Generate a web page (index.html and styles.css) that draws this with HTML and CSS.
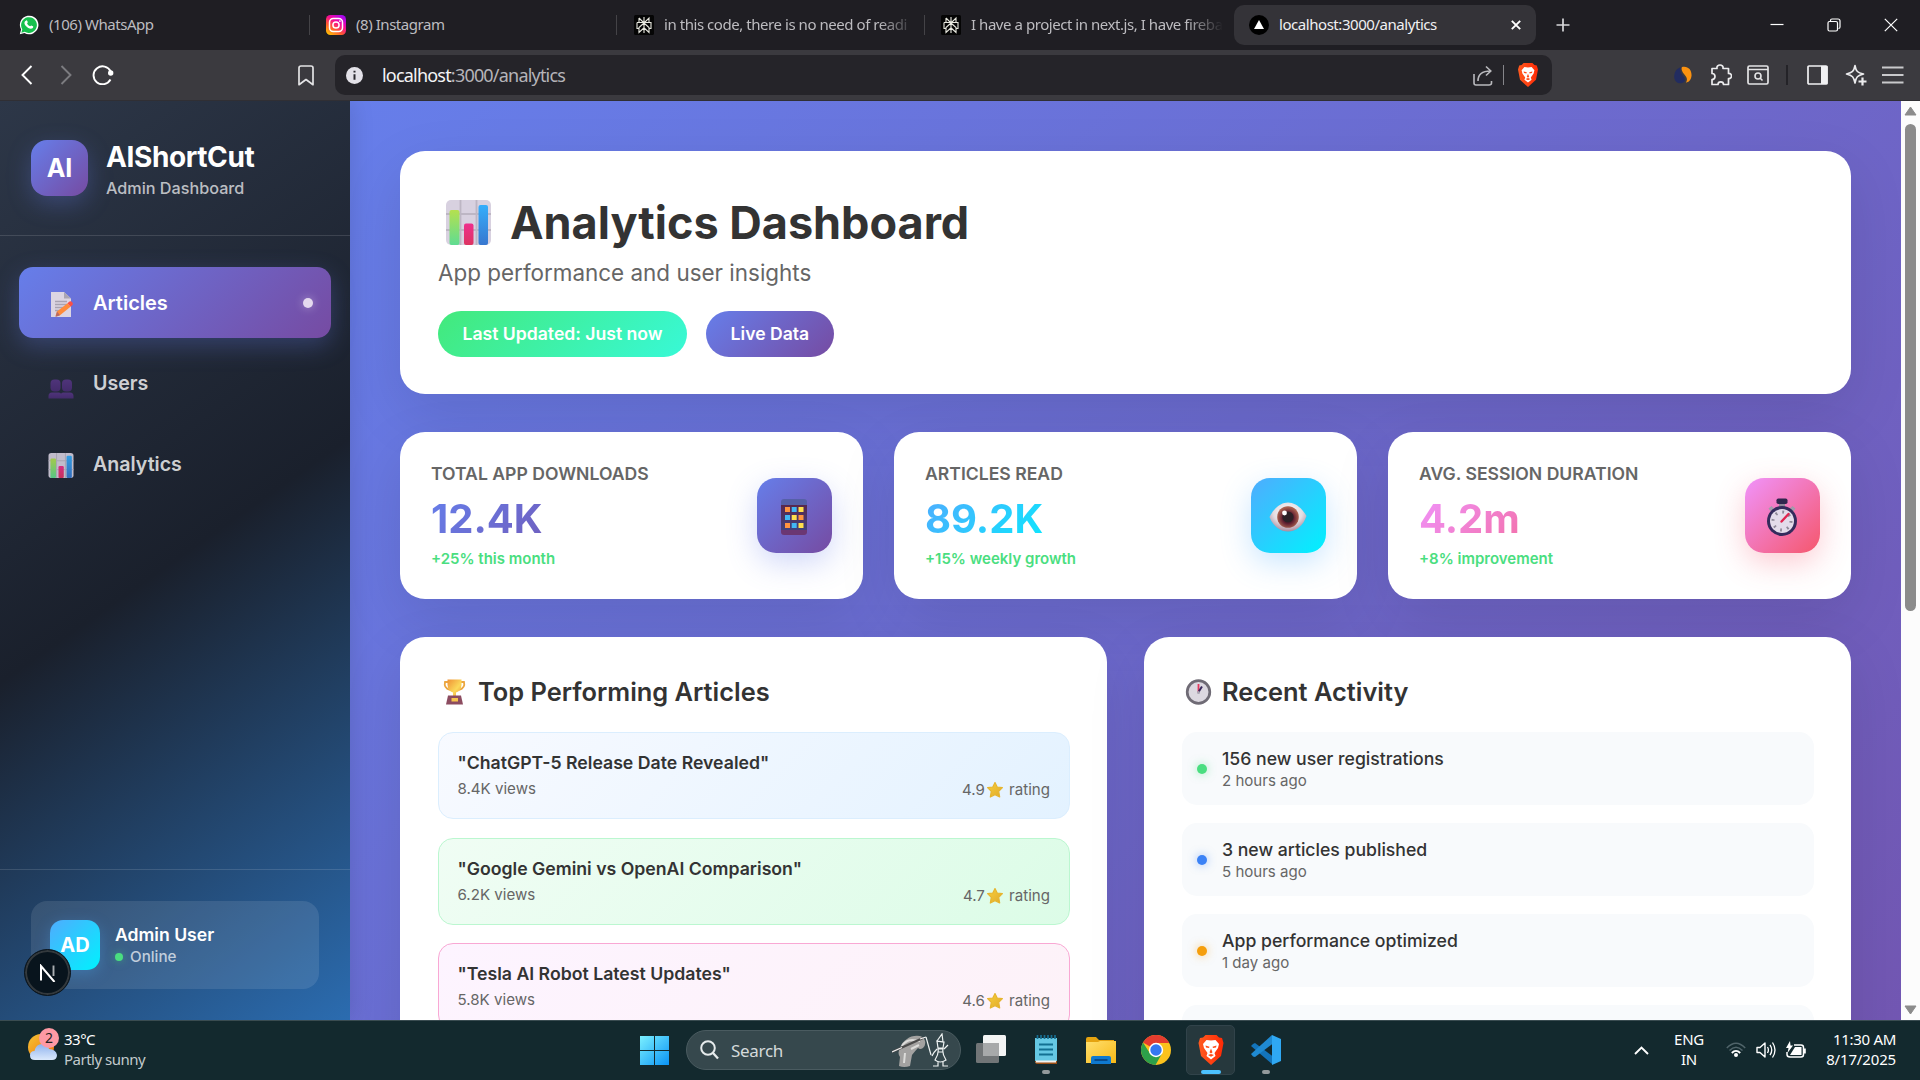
FILE: index.html
```html
<!DOCTYPE html>
<html lang="en">
<head>
<meta charset="utf-8">
<title>AIShortCut Analytics</title>
<link rel="stylesheet" href="styles.css">
</head>
<body>
<svg class="defs" width="0" height="0" aria-hidden="true">
  <defs>
    <linearGradient id="barGreen" x1="0" y1="0" x2="0" y2="1"><stop offset="0" stop-color="#b5e04f"/><stop offset="1" stop-color="#5fdc92"/></linearGradient>
    <linearGradient id="barPink" x1="0" y1="0" x2="0" y2="1"><stop offset="0" stop-color="#ee2f8d"/><stop offset="1" stop-color="#dd3461"/></linearGradient>
    <linearGradient id="barBlue" x1="0" y1="0" x2="0" y2="1"><stop offset="0" stop-color="#35aefb"/><stop offset="1" stop-color="#3877cf"/></linearGradient>
    <linearGradient id="gold" x1="0" y1="0" x2="1" y2="1"><stop offset="0" stop-color="#ef9236"/><stop offset=".6" stop-color="#fbd95a"/><stop offset="1" stop-color="#f09b35"/></linearGradient>
    <linearGradient id="starGold" x1="0" y1="0" x2="1" y2="1"><stop offset="0" stop-color="#f9d03a"/><stop offset="1" stop-color="#dfa92c"/></linearGradient>
    <linearGradient id="insta" x1=".1" y1="1" x2=".8" y2="0"><stop offset="0" stop-color="#ffc800"/><stop offset=".35" stop-color="#ff5a30"/><stop offset=".65" stop-color="#f4089c"/><stop offset="1" stop-color="#a308f5"/></linearGradient>
    <linearGradient id="win" x1="0" y1="0" x2="1" y2="1"><stop offset="0" stop-color="#7bf0ff"/><stop offset="1" stop-color="#0a93f5"/></linearGradient>
    <linearGradient id="bravered" x1="0" y1="0" x2="1" y2="0"><stop offset="0" stop-color="#ff5a1f"/><stop offset="1" stop-color="#ff2a06"/></linearGradient>
    <linearGradient id="sun" x1="0" y1="0" x2="1" y2="1"><stop offset="0" stop-color="#f6c435"/><stop offset="1" stop-color="#f0700c"/></linearGradient>
    <linearGradient id="cloud" x1="0" y1="0" x2="0" y2="1"><stop offset="0" stop-color="#8fb2ee"/><stop offset="1" stop-color="#dbe9fc"/></linearGradient>
    <linearGradient id="folder" x1="0" y1="0" x2="1" y2="1"><stop offset="0" stop-color="#ffdf6e"/><stop offset="1" stop-color="#f8b916"/></linearGradient>
    <linearGradient id="phone" x1="0" y1="0" x2="0" y2="1"><stop offset="0" stop-color="#5560a8"/><stop offset=".17" stop-color="#5560a8"/><stop offset=".18" stop-color="#58284f"/><stop offset=".85" stop-color="#40417c"/><stop offset=".86" stop-color="#6b3773"/><stop offset="1" stop-color="#6b3773"/></linearGradient>
    <radialGradient id="iris" cx=".5" cy=".55" r=".5"><stop offset="0" stop-color="#4b1a2c"/><stop offset=".5" stop-color="#5c1c30"/><stop offset="1" stop-color="#a9604f"/></radialGradient>
    <radialGradient id="eyeball" cx=".5" cy=".35" r=".65"><stop offset="0" stop-color="#fff"/><stop offset=".6" stop-color="#e4dde2"/><stop offset="1" stop-color="#a98a9d"/></radialGradient>
    <linearGradient id="bust" x1="0" y1="0" x2="0" y2="1"><stop offset="0" stop-color="#4f347a"/><stop offset="1" stop-color="#432b6b"/></linearGradient>
  </defs>
  <symbol id="chart" viewBox="0 0 45 45">
    <rect width="45" height="45" rx="5" fill="#d8d1e0"/>
    <path d="M14.500 0V45M30.500 0V45M0 14H45M0 30H45" stroke="#bdb6c4" stroke-width="1.800"/>
    <rect x="3.500" y="10" width="10" height="35" rx="2" fill="url(#barGreen)"/>
    <rect x="18" y="23.500" width="9.500" height="21.500" rx="2" fill="url(#barPink)"/>
    <rect x="32.500" y="5" width="9.500" height="40" rx="2" fill="url(#barBlue)"/>
  </symbol>
  <symbol id="lion" viewBox="0 0 25 30">
    <path d="M7 0H18L20.500 2.500 23.500 3 25 8 22.500 21 12.500 30 2.500 21 0 8 1.500 3 4.500 2.500Z" fill="url(#bravered)"/>
    <path d="M12.500 5.500 17 5 20.500 9 19.500 13 16 18 17 21 12.500 24.500 8 21 9 18 5.500 13 4.500 9 8 5Z" fill="#fff"/>
    <path d="M7 10.500 11 11.700 10.500 13 7.500 12.500ZM18 10.500 14 11.700 14.500 13 17.500 12.500ZM12.500 13.500 14 17.200 12.500 18.400 11 17.200ZM9.500 20 12.500 18.900 15.500 20 12.500 21.700Z" fill="#ff4b18"/>
  </symbol>
  <symbol id="star" viewBox="0 0 16 16"><path d="M8 .5 10.200 5 15.400 5.700 11.700 9.400 12.700 15 8 12.600 3.300 15 4.300 9.400 .6 5.700 5.800 5Z" fill="url(#starGold)" stroke="#e6b52f" stroke-width="1.200" stroke-linejoin="round"/></symbol>
  <symbol id="knot" viewBox="0 0 20 20">
    <rect width="20" height="20" rx="1.500" fill="#050505"/>
    <path d="M10 2V18M5 3 10 8 15 3V7.500M5 3V7.500M3 7.500H17V13.500H15M3 7.500V13.500H5M10 8 5 12.500V17.500L10 12.800 15 17.500V12.500L10 8" fill="none" stroke="#e9e9e0" stroke-width="1.100"/>
  </symbol>
</svg>

<div class="screen">
  <div class="tabs">
    <div class="tab t1">
      <svg width="20" height="20" viewBox="0 0 20 20"><path d="M.8 19.300 2.100 14.600A9.300 9.300 0 1 1 5.500 18Z" fill="#fff"/><path d="M2.300 17.800 3.300 14.300A7.900 7.900 0 1 1 5.800 16.800Z" fill="#16c04d"/><path d="M7.200 5.400c.5-.2.9 0 1.100.6l.5 1.300-.7 1.100c.7 1.400 1.600 2.200 3 2.900l1.100-.9 1.800.9c.4.300.2 1.500-.5 2-1.800 1.200-4.900-.2-6.600-2.300-1.800-2.200-2.100-4.400.3-5.600Z" fill="#fff"/></svg>
      <span>(106) WhatsApp</span></div>
    <i class="tsep"></i>
    <div class="tab t2">
      <svg width="20" height="20" viewBox="0 0 20 20"><rect width="20" height="20" rx="4.500" fill="url(#insta)"/><rect x="3.500" y="3.500" width="13" height="13" rx="3.800" fill="none" stroke="#fff" stroke-width="1.500"/><circle cx="10" cy="10" r="3.100" fill="none" stroke="#fff" stroke-width="1.500"/><circle cx="13.900" cy="6.100" r=".9" fill="#fff"/></svg>
      <span>(8) Instagram</span></div>
    <i class="tsep"></i>
    <div class="tab t3"><svg width="20" height="20"><use href="#knot"/></svg><span class="fade">in this code, there is no need of readi</span></div>
    <i class="tsep"></i>
    <div class="tab t4"><svg width="20" height="20"><use href="#knot"/></svg><span class="fade">I have a project in next.js, I have fireba</span></div>
    <div class="tab active">
      <svg width="20" height="20" viewBox="0 0 20 20"><circle cx="10" cy="10" r="10" fill="#000"/><path d="M10 5 15 14H5Z" fill="#fff"/></svg>
      <span>localhost:3000/analytics</span>
      <svg class="x" width="10" height="10" viewBox="0 0 10 10"><path d="M.8.8 9.200 9.200M9.200.8.8 9.200" stroke="#fff" stroke-width="1.900"/></svg>
    </div>
    <svg class="plus" width="14" height="14" viewBox="0 0 14 14"><path d="M7 .5V13.500M.5 7H13.500" stroke="#d8d8da" stroke-width="1.700"/></svg>
    <div class="winctl">
      <svg width="14" height="14" viewBox="0 0 14 14"><path d="M.5 6.500H13.500" stroke="#fff" stroke-width="1.200"/></svg>
      <svg width="14" height="14" viewBox="0 0 14 14"><rect x="1" y="3.500" width="9.500" height="9.500" rx="1.500" fill="none" stroke="#fff" stroke-width="1.200"/><path d="M3.500 3V2.500Q3.500 1 5 1H11Q13 1 13 3V9Q13 10.500 11.500 10.500" fill="none" stroke="#fff" stroke-width="1.200"/></svg>
      <svg width="14" height="14" viewBox="0 0 14 14"><path d="M.8.8 13.200 13.200M13.200.8.8 13.200" stroke="#fff" stroke-width="1.200"/></svg>
    </div>
  </div>

  <div class="toolbar">
    <div class="nav-btns">
      <svg width="12" height="20" viewBox="0 0 12 20"><path d="M10.500 1 1.500 10 10.500 19" fill="none" stroke="#fff" stroke-width="1.900"/></svg>
      <svg width="12" height="20" viewBox="0 0 12 20"><path d="M1.500 1 10.500 10 1.500 19" fill="none" stroke="#7c7c80" stroke-width="1.900"/></svg>
      <svg width="22" height="20" viewBox="0 0 22 20"><path d="M18.500 14.500A9 9 0 1 1 18.700 6.500" fill="none" stroke="#fff" stroke-width="1.900"/><circle cx="18.700" cy="8" r="2.700" fill="#fff"/></svg>
      <svg class="bm" width="16" height="21" viewBox="0 0 16 21"><path d="M1 19.700V3Q1 1 3 1H13Q15 1 15 3V19.700L8 14.500Z" fill="none" stroke="#e3e3e5" stroke-width="1.700" stroke-linejoin="round"/></svg>
    </div>
    <div class="address">
      <svg width="17" height="17" viewBox="0 0 17 17"><circle cx="8.500" cy="8.500" r="8.500" fill="#e3e1e8"/><path d="M8.500 7.200V12.700M8.500 3.700V5.500" stroke="#2a292e" stroke-width="2"/></svg>
      <span class="url"><b>localhost</b>:3000/analytics</span>
      <svg class="share" width="20" height="21" viewBox="0 0 20 21"><path d="M1 9V18Q1 20 3 20H16Q18.500 20 18.500 18V16M5 16C5 9 9 6 17.500 6M13 1.500 17.800 6 13 10.500" fill="none" stroke="#b9b9bd" stroke-width="1.600"/></svg>
      <i></i>
      <svg width="20" height="24"><use href="#lion" width="20" height="24"/></svg>
    </div>
    <div class="ext">
      <svg width="18" height="18" viewBox="0 0 18 18"><path d="M7 1C1 3 0 8 .3 12 1 16 4 18 8 17 12 16 11.500 13 9 10 6.500 7 5.500 4 7 1Z" fill="#222c60"/><path d="M8 1C14-.5 18 4 17.500 10 17 14.500 14 16.500 12 16.500 14 13 12.500 11 10 8 8 5.500 7 3 8 1Z" fill="#fb9210"/></svg>
      <svg width="22" height="22" viewBox="0 0 22 22"><path d="M2 4.500H7C6-.2 14-.2 13 4.500H18.500V9.500C22.500 9 22.500 15 18.500 14.500V20.500H13.500C13.500 17 8 17 8 20.500H2V15.500C6 15.500 6 9.500 2 9.500Z" fill="none" stroke="#ececee" stroke-width="1.700" stroke-linejoin="round"/></svg>
      <svg width="22" height="20" viewBox="0 0 22 20"><rect x="1" y="1" width="20" height="18" rx="1.500" fill="none" stroke="#e4e4e6" stroke-width="1.700"/><path d="M1 4.500H21" stroke="#e4e4e6" stroke-width="1.500"/><circle cx="11" cy="11" r="3" fill="none" stroke="#e4e4e6" stroke-width="1.600"/><path d="M13 13 15.500 15.500" stroke="#e4e4e6" stroke-width="1.600"/></svg>
      <i></i>
      <svg width="21" height="20" viewBox="0 0 21 20"><rect x="1" y="1" width="19" height="18" rx="1" fill="none" stroke="#f1f1f3" stroke-width="1.700"/><rect x="14" y="1" width="6.500" height="18" fill="#f1f1f3"/></svg>
      <svg width="22" height="22" viewBox="0 0 22 22"><path d="M10 1.500C11 7.500 12.500 8.700 18.500 10 12.500 11.500 11 13 10 19 8.800 13 7.500 11.500 1.500 10 7.500 8.500 8.800 7.500 10 1.500Z" fill="none" stroke="#ececee" stroke-width="1.600" stroke-linejoin="round"/><path d="M17.500 13.500V21.500M13.500 17.500H21.500" stroke="#ececee" stroke-width="2.200"/></svg>
      <svg width="22" height="18" viewBox="0 0 22 18"><path d="M0 1.500H21.500M0 9H21.500M0 16.500H21.500" stroke="#c9c9cc" stroke-width="1.900"/></svg>
    </div>
  </div>

  <div class="page">
    <aside class="sidebar">
      <div class="brand">
        <div class="logo">AI</div>
        <div><div class="brand-name">AIShortCut</div><div class="brand-sub">Admin Dashboard</div></div>
      </div>
      <nav class="menu">
        <a class="item on">
          <svg width="26" height="26" viewBox="0 0 26 26"><path d="M3 1H16L23 7.500V26H3Z" fill="#dcd5e2"/><path d="M16 1V7.500H23Z" fill="#aba5b2"/><path d="M7 10.500H19M7 13.500H19M7 16.500H17M7 19.500H13" stroke="#a9a3b1" stroke-width="1.400"/><path d="M7.500 25 9 20.500 19.500 12.300 22.500 15.800 12 24.300Z" fill="#ff8b3a"/><path d="M19.500 12.300 21.500 10.500Q23 9.800 24.200 11.200 25.500 12.800 24.500 14L22.500 15.800Z" fill="#fb4f45"/><path d="M7.500 26 9 20.500 12 24.300Z" fill="#b86a63"/></svg>
          <span>Articles</span><i></i></a>
        <a class="item">
          <svg class="low" width="26" height="20" viewBox="0 0 26 20"><g fill="url(#bust)"><rect x="2.500" y=".5" width="10" height="12" rx="4"/><rect x="14" y=".5" width="10" height="12" rx="4"/><path d="M.5 19.500V17Q.5 13.500 4 13.500H11Q13 13.500 13 15 13 13.500 15 13.500H22Q25.500 13.500 25.500 17V19.500Z"/></g></svg>
          <span>Users</span></a>
        <a class="item"><svg width="25" height="25" opacity=".88"><use href="#chart"/></svg><span>Analytics</span></a>
      </nav>
      <div class="side-foot">
        <div class="user">
          <div class="avatar">AD</div>
          <div class="who"><div class="user-name">Admin User</div><div class="status"><i></i>Online</div></div>
        </div>
      </div>
      <div class="dev-badge"><svg width="18" height="18" viewBox="0 0 18 18"><path d="M2 16.500V2L15.500 18" fill="none" stroke="#fff" stroke-width="2"/><path d="M14.500 1.500V12" stroke="#a9adb0" stroke-width="1.900"/></svg></div>
    </aside>

    <main class="main">
      <section class="card hero">
        <h1><svg width="45" height="45"><use href="#chart"/></svg>Analytics Dashboard</h1>
        <p>App performance and user insights</p>
        <div class="pills"><span class="pill green">Last Updated: Just now</span><span class="pill violet">Live Data</span></div>
      </section>

      <section class="stats">
        <div class="card stat">
          <div class="figures"><div class="label">TOTAL APP DOWNLOADS</div><div class="num n1">12.4K</div><div class="delta">+25% this month</div></div>
          <div class="badge b1"><svg width="28" height="38" viewBox="0 0 28 38"><rect x="1" y="1" width="26" height="36" rx="3" fill="url(#phone)"/><g fill="#ff9440"><rect x="5" y="9" width="5" height="5"/><rect x="18.500" y="17" width="5" height="5"/><rect x="5" y="25" width="5" height="5"/></g><g fill="#41b8f5"><rect x="11.700" y="9" width="5" height="5"/><rect x="5" y="17" width="5" height="5"/><rect x="11.700" y="25" width="5" height="5"/></g><g fill="#ffe04d"><rect x="18.500" y="9" width="5" height="5"/><rect x="11.700" y="17" width="5" height="5"/><rect x="18.500" y="25" width="5" height="5"/></g></svg></div>
        </div>
        <div class="card stat">
          <div class="figures"><div class="label">ARTICLES READ</div><div class="num n2">89.2K</div><div class="delta">+15% weekly growth</div></div>
          <div class="badge b2"><svg width="38" height="30" viewBox="0 0 38 30"><path d="M.5 15C5 6 12 .5 19 .5S33 6 37.500 14C34 24 27 29.500 19 29.500S4 24 .5 15Z" fill="url(#eyeball)"/><circle cx="19" cy="15" r="10.800" fill="url(#iris)"/><circle cx="19" cy="15" r="5.600" fill="#2c2127"/><circle cx="15.500" cy="11" r="2.400" fill="#fff"/></svg></div>
        </div>
        <div class="card stat">
          <div class="figures"><div class="label">AVG. SESSION DURATION</div><div class="num n3">4.2m</div><div class="delta">+8% improvement</div></div>
          <div class="badge b3"><svg width="32" height="38" viewBox="0 0 32 38"><path d="M2.500 10.500 5.500 8 9.500 12 6 15ZM29.500 10.500 26.500 8 22.500 12 26 15Z" fill="#a29bab"/><rect x="13" y="4" width="6" height="6" fill="#8d8797"/><rect x="10.500" y=".5" width="11" height="5.500" rx="1.800" fill="#30264e"/><circle cx="16" cy="23" r="15" fill="#342b5c"/><circle cx="16" cy="23" r="12" fill="#e3dcea"/><circle cx="16" cy="23" r="9" fill="none" stroke="#8f8a99" stroke-width="3" stroke-dasharray="1.800 5.270"/><path d="M15.500 23.500 22.500 16" stroke="#e0244f" stroke-width="2.400" stroke-linecap="round"/></svg></div>
        </div>
      </section>

      <section class="panels">
        <div class="card panel">
          <h2><svg width="27" height="26" viewBox="0 0 27 26"><path d="M7 3H4Q2.500 9 9 11M20 3H23Q24.500 9 18 11" fill="none" stroke="#eba63f" stroke-width="1.800"/><path d="M6.500.5H20.500V6Q20 12 15 13.500V17H12V13.500Q7 12 6.500 6Z" fill="url(#gold)"/><path d="M7 16.500H20L22 25.500H5Z" fill="#8c4c60"/><rect x="10.500" y="19" width="6.500" height="3.500" fill="#f7c34d"/></svg>Top Performing Articles</h2>
          <div class="articles">
            <article class="a1"><h3>"ChatGPT-5 Release Date Revealed"</h3><div><span>8.4K views</span><span class="rate">4.9<svg width="16" height="16"><use href="#star"/></svg> rating</span></div></article>
            <article class="a2"><h3>"Google Gemini vs OpenAI Comparison"</h3><div><span>6.2K views</span><span class="rate">4.7<svg width="16" height="16"><use href="#star"/></svg> rating</span></div></article>
            <article class="a3"><h3>"Tesla AI Robot Latest Updates"</h3><div><span>5.8K views</span><span class="rate">4.6<svg width="16" height="16"><use href="#star"/></svg> rating</span></div></article>
          </div>
        </div>
        <div class="card panel">
          <h2><svg width="27" height="26" viewBox="0 0 27 26"><circle cx="13.500" cy="13" r="11.300" fill="#dcd8e0" stroke="#6f6b75" stroke-width="2.700"/><path d="M13.500 14V5" stroke="#e3395f" stroke-width="1.800"/><path d="M13.500 13 17 7.500" stroke="#39295c" stroke-width="2"/><circle cx="13.500" cy="13.500" r="1.500" fill="#aaa5b2"/></svg>Recent Activity</h2>
          <div class="acts">
            <div class="act"><i class="d1"></i><div><b>156 new user registrations</b><small>2 hours ago</small></div></div>
            <div class="act"><i class="d2"></i><div><b>3 new articles published</b><small>5 hours ago</small></div></div>
            <div class="act"><i class="d3"></i><div><b>App performance optimized</b><small>1 day ago</small></div></div>
            <div class="act"></div>
          </div>
        </div>
      </section>
    </main>

    <div class="scroll">
      <svg width="13" height="10" viewBox="0 0 13 10"><path d="M6.500 1 12 9H1Z" fill="#8b8b8b" stroke="#8b8b8b" stroke-linejoin="round"/></svg>
      <i></i>
      <svg class="down" width="13" height="10" viewBox="0 0 13 10"><path d="M6.500 9 12 1H1Z" fill="#8b8b8b" stroke="#8b8b8b" stroke-linejoin="round"/></svg>
    </div>
  </div>

  <footer class="taskbar">
    <div class="weather">
      <svg width="32" height="40" viewBox="0 0 32 40"><circle cx="14" cy="24" r="13" fill="url(#sun)"/><path d="M8 37Q3 37 3 32.500T7.500 28Q9 21 15 21T22 26Q29 26.500 30 32 30 37 25 37Z" fill="url(#cloud)"/></svg>
      <em>2</em>
      <div class="wtext"><span>33°C</span><span class="dim">Partly sunny</span></div>
    </div>
    <div class="apps">
      <svg class="start" width="29" height="29" viewBox="0 0 29 29"><path d="M0 0H14V14H0ZM15 0H29V14H15ZM0 15H14V29H0ZM15 15H29V29H15Z" fill="url(#win)"/></svg>
      <div class="search">
        <svg width="19" height="20" viewBox="0 0 19 20"><circle cx="8" cy="8" r="6.800" fill="none" stroke="#e6ebec" stroke-width="2"/><path d="M12.800 12.800 18 18.500" stroke="#e6ebec" stroke-width="2.300"/></svg>
        <span>Search</span>
        <svg width="58" height="34" viewBox="0 0 58 34"><path d="M7 33 8 24Q5 20 8 15 10 9 15 6 20 2 28 3 32 4 33 8 34 12 31 15 28 17 26 15 23 18 20 22L18 33Q12 35 7 33Z" fill="#a3a2a1"/><path d="M10 13Q14 7 20 7L28 8M19 16 27 12M12 30 13 20" stroke="#dcdcda" stroke-width="2" fill="none"/><path d="M0 19 31 5" stroke="#4b4b4b" stroke-width="2.400"/><path d="M0 19 10 14.500M28 6 34 4" stroke="#eee" stroke-width="1.300"/><g fill="none" stroke="#eef2f2" stroke-width="1.200"><path d="M34 4 39 22M45 8 50 1 51 9ZM45 8 52 9 51 15H46ZM45 16Q41 20 40 23M52 16 56 12M46 16Q47 21 43 27 48 31 54 27 50 21 51 16ZM46 29V33H41M51 29V33H56M46 19H51"/></g></svg>
      </div>
      <svg class="tv" width="30" height="30" viewBox="0 0 30 30"><rect y="8" width="23" height="20" rx="1.500" fill="#717577"/><rect x="7" y="0" width="23" height="21" rx="1.500" fill="#f3f4f4"/><path d="M7 8H23V21H7Z" fill="#a7a9aa"/></svg>
      <div class="app"><svg width="24" height="30" viewBox="0 0 24 30"><rect x="1" y="3" width="22" height="25" fill="#65c8e4"/><path d="M1 26H23V29H3Q1 29 1 26Z" fill="#9c4f16"/><path d="M2 25.500H22V27.500H2Z" fill="#f1f1ef"/><path d="M3.500 0V4M7 0V4M10.500 0V4M14 0V4M17.500 0V4M21 0V4" stroke="#176e92" stroke-width="1.700"/><path d="M5 9.500H19M5 14.500H19M5 19.500H19" stroke="#127092" stroke-width="1.800"/></svg><i></i></div>
      <div class="app"><svg width="30" height="30" viewBox="0 0 30 30"><path d="M0 4Q0 2 2 2H10L13 5H28V12H0Z" fill="#e5a310"/><path d="M0 7H12L14 6H30V28H0Z" fill="url(#folder)"/><path d="M5 29V23Q5 21 7 21H23Q25 21 25 23V29Z" fill="#0f79cf"/><path d="M8.500 25H21.500" stroke="#073f7d" stroke-width="1.600"/></svg></div>
      <div class="app"><svg width="30" height="30" viewBox="0 0 30 30"><circle cx="15" cy="15" r="15" fill="#fbc21d"/><path d="M15 15 2 7.500A15 15 0 0 1 28 7.500L27.900 8H15Z" fill="#e43c2f"/><path d="M15 22 9 18.500 2 7.500A15 15 0 0 0 14.500 30L21 18.500Z" fill="#2ca04a"/><circle cx="15" cy="15" r="7.200" fill="#fff"/><circle cx="15" cy="15" r="5.700" fill="#3478f0"/></svg></div>
      <div class="app cur"><svg width="26" height="30"><use href="#lion" width="26" height="30"/></svg><i></i></div>
      <div class="app"><svg width="30" height="30" viewBox="0 0 30 30"><path d="M2 9 0 11 21 29 22 21.500 4 8Z" fill="#1374bb"/><path d="M0 19 2 21.500 4 22 22 8.500 21 0Z" fill="#1f8ad2"/><path d="M21 0 30 4V26L21 30 21 22V8Z" fill="#2fa8f3"/></svg><i></i></div>
    </div>
    <div class="tray">
      <svg class="chev" width="15" height="9" viewBox="0 0 15 9"><path d="M1 8 7.500 1.500 14 8" fill="none" stroke="#fff" stroke-width="1.900"/></svg>
      <div class="lang"><span>ENG</span><span>IN</span></div>
      <svg class="wifi" width="20" height="16" viewBox="0 0 20 16"><path d="M.8 6Q10-3.500 19.200 6" fill="none" stroke="#50646a" stroke-width="1.500"/><path d="M3.500 8.500Q10 1.800 16.500 8.500" fill="none" stroke="#50646a" stroke-width="1.500"/><path d="M5.800 11Q10 6.800 14.200 11" fill="none" stroke="#fff" stroke-width="1.900"/><circle cx="10" cy="13" r="2" fill="#fff"/></svg>
      <svg class="vol" width="20" height="18" viewBox="0 0 20 18"><path d="M1 6.500H4L9 2V16L4 11.500H1Z" fill="none" stroke="#fff" stroke-width="1.400" stroke-linejoin="round"/><path d="M11.500 6Q13.300 9 11.500 12M14 3.800Q17.500 9 14 14.200M16.500 1.500Q21.500 9 16.500 16.500" fill="none" stroke="#fff" stroke-width="1.300"/></svg>
      <svg class="bat" width="21" height="18" viewBox="0 0 21 18"><path d="M8 4H15Q17.500 4 17.500 6.500V13.500Q17.500 16 15 16H4Q1 16 1 13.500V11" fill="none" stroke="#fff" stroke-width="1.500"/><path d="M18.500 7.500V12.500" stroke="#fff" stroke-width="2.600"/><path d="M9 6H15.500V14H4Z" fill="#fff"/><path d="M4 0 0 7H2.500L1.500 12 7 4.500H4.500Z" fill="#fff"/></svg>
      <div class="clock"><span>11:30 AM</span><span class="date">8/17/2025</span></div>
    </div>
  </footer>
</div>
</body>
</html>
```
FILE: styles.css
```css
* { box-sizing: border-box; margin: 0; padding: 0; }
body { width: 1920px; height: 1080px; overflow: hidden; font-family: Inter, "Liberation Sans", sans-serif; }
svg { display: block; flex: none; }
i { font-style: normal; flex: none; }
.defs { position: absolute; }
.screen { display: flex; flex-direction: column; height: 1080px; overflow: hidden; }
.tabs, .toolbar, .taskbar { font-family: "Noto Sans", "Open Sans", sans-serif; white-space: nowrap; flex: none; }

/* browser tabs */
.tabs { height: 50px; background: #1f1e23; display: flex; align-items: center; color: #bdbcc0; font-size: 15px; }
.tab { display: flex; align-items: center; gap: 10px; height: 40px; letter-spacing: -.45px; }
.tab span { padding-bottom: 2px; }
.t1 { width: 309px; padding-left: 19px; }
.t2 { width: 306px; padding-left: 16px; }
.t3 { width: 307px; padding-left: 17px; }
.t4 { width: 309px; padding-left: 16px; }
.tsep { width: 1px; height: 20px; background: #444347; }
.fade { -webkit-mask-image: linear-gradient(90deg, #000 215px, transparent 252px); mask-image: linear-gradient(90deg, #000 215px, transparent 252px); }
.active { width: 302px; background: #343338; border-radius: 10px; padding: 0 15px; color: #f0f0f2; }
.x { margin-left: auto; }
.plus { margin-left: 20px; }
.winctl { display: flex; gap: 43px; margin-left: auto; padding-right: 22px; }

/* toolbar */
.toolbar { height: 51px; background: #3b3a3f; border-bottom: 1px solid #302f34; display: flex; align-items: center; }
.nav-btns { width: 335px; display: flex; align-items: center; padding-left: 21px; }
.nav-btns svg + svg { margin-left: 27px; }
.nav-btns svg:nth-child(3) { margin-left: 20px; }
.nav-btns .bm { margin-left: 184px; }
.address { width: 1217px; height: 40px; background: #252429; border-radius: 10px; display: flex; align-items: center; padding: 0 14px 0 11px; }
.url { margin-left: 19px; font-size: 18px; letter-spacing: -.8px; color: #b5b4b9; padding-bottom: 1px; }
.url b { color: #f4f4f6; font-weight: 400; }
.share { margin-left: auto; }
.address i { width: 1px; height: 20px; background: #85858a; margin: 0 14px 0 10px; }
.ext { flex: 1; display: flex; align-items: center; padding-left: 122px; }
.ext svg:nth-child(2) { margin-left: 18px; }
.ext svg:nth-child(3) { margin-left: 15px; }
.ext i { width: 2px; height: 20px; background: #242328; margin: 0 19px 0 17px; }
.ext svg:nth-child(6) { margin-left: 17px; }
.ext svg:nth-child(7) { margin-left: 15px; }

/* web page */
.page { flex: 1; min-height: 0; display: flex; overflow: hidden; position: relative; }
.sidebar { width: 350px; flex: none; display: flex; flex-direction: column; background: linear-gradient(145deg, #2d3748 0%, #1a202c 50%, #2b6cb0 100%); color: #fff; z-index: 1; box-shadow: 4px 0 20px rgba(0,0,0,.1); }
.brand { height: 135px; flex: none; padding: 38px 31px 0; border-bottom: 1px solid rgba(255,255,255,.13); display: flex; gap: 18px; }
.logo { width: 57px; height: 56px; border-radius: 16px; background: linear-gradient(135deg, #667eea, #764ba2); display: flex; align-items: center; justify-content: center; font-weight: 700; font-size: 25px; box-shadow: 0 8px 25px rgba(102,126,234,.3); flex: none; margin-top: 1px; }
.brand-name { font-size: 28px; font-weight: 700; line-height: 34px; letter-spacing: -.4px; margin-top: 1px; }
.brand-sub { font-size: 16.200px; font-weight: 500; line-height: 24px; margin-top: 2px; color: rgba(255,255,255,.7); }
.menu { padding: 31px 19px; display: flex; flex-direction: column; gap: 9.600px; }
.item { height: 71px; border-radius: 14px; display: flex; align-items: center; padding: 0 18px 0 29px; gap: 19px; font-size: 19.600px; font-weight: 600; color: rgba(255,255,255,.8); }
.item svg { width: 26px; margin-top: 3px; }
.item .low { margin-top: 11px; }
.item.on { font-size: 20px; background: linear-gradient(135deg, #667eea, #764ba2); color: #fff; box-shadow: 0 8px 25px rgba(102,126,234,.3); }
.item i { width: 10px; height: 10px; border-radius: 50%; background: #e4d9ee; margin-left: auto; box-shadow: 0 0 10px rgba(255,255,255,.4); }
.side-foot { margin-top: auto; height: 151px; border-top: 1px solid rgba(255,255,255,.13); padding: 31px; }
.user { height: 88px; border-radius: 16px; background: rgba(255,255,255,.1); display: flex; align-items: center; padding-left: 19px; gap: 15px; }
.avatar { width: 50px; height: 50px; border-radius: 13px; background: linear-gradient(135deg, #4facfe, #00f2fe); display: flex; align-items: center; justify-content: center; font-weight: 700; font-size: 20px; box-shadow: 0 4px 15px rgba(79,172,254,.3); }
.who { padding-top: 2px; }
.user-name { font-size: 17.600px; font-weight: 600; line-height: 22px; }
.status { display: flex; align-items: center; gap: 7px; font-size: 15.200px; line-height: 22px; color: rgba(255,255,255,.7); font-weight: 500; }
.status i { width: 8px; height: 8px; border-radius: 50%; background: #4ade80; box-shadow: 0 0 8px rgba(74,222,128,.5); }
.dev-badge { position: absolute; left: 24px; top: 848px; width: 47px; height: 47px; border-radius: 50%; background: #08141d; border: 1px solid #0c151c; box-shadow: inset 0 0 0 2px #33393d; display: flex; align-items: center; justify-content: center; }

.main { width: 1551px; height: 1666px; flex: none; padding: 50px; background: linear-gradient(135deg, #667eea 0%, #764ba2 100%); display: flex; flex-direction: column; }
.card { background: #fff; border-radius: 25px; box-shadow: 0 20px 60px rgba(0,0,0,.1); }
.hero { height: 243px; padding: 39px 38px 37px; color: #333; flex: none; }
h1 { font-size: 45px; font-weight: 700; line-height: 65px; display: flex; align-items: center; gap: 19px; padding-left: 8px; }
.hero p { font-size: 22.450px; line-height: 36px; color: #666; }
.pills { display: flex; gap: 19px; margin-top: 20px; }
.pill { height: 46px; line-height: 46px; border-radius: 25px; padding: 0 24.500px; font-size: 17.600px; font-weight: 600; color: #fff; }
.green { background: linear-gradient(135deg, #43e97b, #38f9d7); }
.violet { background: linear-gradient(135deg, #667eea, #764ba2); }
.stats { display: grid; grid-template-columns: repeat(3, 1fr); gap: 31px; margin-top: 38px; flex: none; }
.stat { height: 167px; display: flex; align-items: center; justify-content: space-between; padding: 0 31px; }
.figures { padding-top: 1px; }
.label { font-size: 17.600px; font-weight: 600; color: #666; line-height: 22px; }
.num { font-size: 40px; font-weight: 700; line-height: 46px; margin-top: 11px; -webkit-background-clip: text; background-clip: text; color: transparent; }
.n1, .b1 { background-image: linear-gradient(135deg, #667eea, #764ba2); }
.n2, .b2 { background-image: linear-gradient(135deg, #4facfe, #00f2fe); }
.n3, .b3 { background-image: linear-gradient(135deg, #f093fb, #f5576c); }
.delta { font-size: 15px; font-weight: 600; line-height: 22px; margin-top: 6px; color: #4ade80; }
.badge { width: 75px; height: 75px; border-radius: 19px; display: flex; align-items: center; justify-content: center; }
.badge svg { margin: 3px 1px 0 0; }
.b1 { box-shadow: 0 10px 30px rgba(102,126,234,.3); }
.b2 { box-shadow: 0 10px 30px rgba(79,172,254,.3); }
.b3 { box-shadow: 0 10px 30px rgba(245,87,108,.3); }
.panels { display: grid; grid-template-columns: 1fr 1fr; gap: 37px; margin-top: 38px; flex: 1; }
.panel { padding: 38px 37.500px 38px 38px; color: #333; }
h2 { font-size: 25.400px; font-weight: 600; line-height: 34px; display: flex; align-items: center; gap: 10px; padding-left: 3px; }
.articles, .acts { display: flex; flex-direction: column; gap: 18.670px; margin-top: 23px; }
article { height: 87px; border-radius: 15px; padding: 18px 18.500px 0 18.500px; border: 1px solid; }
article h3 { font-size: 17.680px; font-weight: 600; line-height: 23px; }
article div { display: flex; justify-content: space-between; font-size: 15.100px; line-height: 26px; margin-top: 2px; color: #666; }
.rate { display: flex; align-items: center; white-space: pre; margin-top: 1px; }
.rate svg { margin: 0 2px 0 2px; }
.a1 { background: linear-gradient(135deg, #f8faff, #e3f2ff); border-color: #dbeefe; }
.a2 { background: linear-gradient(135deg, #f0fdf4, #dcfce7); border-color: #bbf7d0; }
.a3 { background: linear-gradient(135deg, #fdf4ff, #fdf2f8); border-color: #f9a8d4; }
.act { height: 72.500px; border-radius: 15px; background: #f8fafc; display: flex; align-items: center; padding: 1px 0 0 15px; gap: 15px; }
.act i { width: 10px; height: 10px; border-radius: 50%; }
.d1 { background: #4ade80; box-shadow: 0 0 10px rgba(74,222,128,.5); }
.d2 { background: #3b82f6; box-shadow: 0 0 10px rgba(59,130,246,.5); }
.d3 { background: #f59e0b; box-shadow: 0 0 10px rgba(245,158,11,.5); }
.act b, .act small { display: block; }
.act b { font-size: 17.650px; font-weight: 500; line-height: 23px; margin-top: 1px; }
.act small { font-size: 15.050px; line-height: 22px; color: #666; }
.scroll { width: 19px; background: #fcfcfc; flex: none; display: flex; flex-direction: column; align-items: center; padding: 5px 0 5px; }
.scroll i { width: 11px; height: 487px; border-radius: 6px; background: #8b8b8b; margin-top: 8px; }
.down { margin-top: auto; }

/* taskbar */
.taskbar { height: 60px; background: #13292e; border-top: 1px solid #3a4c51; display: flex; color: #fff; font-size: 15px; position: relative; }
.weather { width: 640px; display: flex; padding: 2px 0 0 27px; position: relative; }
.weather em { position: absolute; left: 39px; top: 7px; width: 20px; height: 20px; border-radius: 50%; background: #fe99a4; color: #222; font-style: normal; font-size: 14px; line-height: 19px; text-align: center; }
.wtext { display: flex; flex-direction: column; line-height: 20px; margin: 6px 0 0 5px; letter-spacing: -.5px; }
.dim { color: #c2cacc; }
.apps { display: flex; align-items: center; height: 58px; }
.search { width: 275px; height: 40px; margin-left: 17px; border-radius: 20px; background: #36484d; border: 1px solid #4a5b60; display: flex; align-items: center; padding: 0 10px 0 13px; }
.search span { margin-left: 12px; font-size: 17px; letter-spacing: -.3px; color: #d5dadb; flex: 1; }
.tv { margin-left: 15px; }
.app { width: 49px; height: 50px; margin-left: 6px; display: flex; align-items: center; justify-content: center; position: relative; border-radius: 5px; border: 1px solid transparent; }
.tv + .app { margin-left: 15px; }
.app i { position: absolute; left: 20px; bottom: 0; width: 8px; height: 4px; border-radius: 2px; background: #93999b; }
.cur { background: #26383d; border-color: #31434a; }
.cur i { left: 14px; width: 20px; background: #4cc2ff; }
.tray { margin-left: auto; display: flex; align-items: center; padding-right: 24px; height: 58px; line-height: 20px; }
.lang, .clock { display: flex; flex-direction: column; padding-bottom: 2px; }
.lang { align-items: center; width: 50px; margin-left: 15px; letter-spacing: -.3px; }
.wifi { margin-left: 12px; }
.vol { margin-left: 10px; }
.bat { margin-left: 10px; }
.clock { align-items: flex-end; width: 89px; letter-spacing: -.3px; }
.date { letter-spacing: -.15px; }
```
